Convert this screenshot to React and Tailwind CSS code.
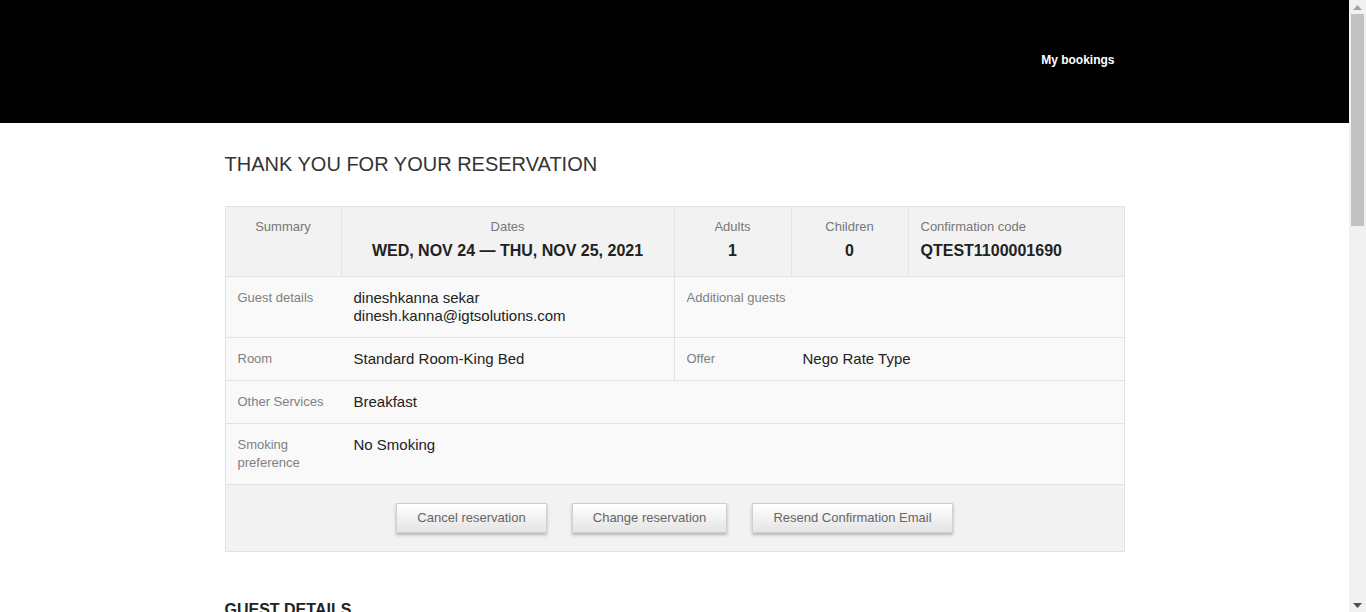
import React from 'react';

const headerCols = [
  { label: 'Summary', value: '', width: 'w-[116px]', align: 'text-center' },
  { label: 'Dates', value: 'WED, NOV 24 — THU, NOV 25, 2021', width: 'w-[333px]', align: 'text-center' },
  { label: 'Adults', value: '1', width: 'w-[117px]', align: 'text-center' },
  { label: 'Children', value: '0', width: 'w-[117px]', align: 'text-center' },
  { label: 'Confirmation code', value: 'QTEST1100001690', width: 'w-[215px]', align: 'text-left pl-3' },
];

const Label = ({ children }) => (
  <div className="w-[128px] shrink-0 pl-3 pr-3 text-[13px] leading-[18px] text-[#808080]">{children}</div>
);

const Value = ({ children }) => (
  <div className="text-[15px] leading-[18px] text-[#222]">{children}</div>
);

const ActionButton = ({ children, width }) => (
  <button
    type="button"
    className={`${width} h-[30px] border border-[#d0d0d0] bg-gradient-to-b from-white to-[#e4e4e4] text-[13px] text-[#666] shadow-[0_2px_3px_rgba(0,0,0,0.25)]`}
  >
    {children}
  </button>
);

const Scrollbar = () => (
  <div className="flex w-[17px] shrink-0 flex-col items-center bg-[#f1f1f1]">
    <div className="flex h-[14px] w-full items-center justify-center">
      <svg width="9" height="5" viewBox="0 0 9 5"><path d="M4.5 0L9 5H0z" fill="#a3a3a3" /></svg>
    </div>
    <div className="h-[212px] w-[13px] bg-[#c1c1c1]" />
    <div className="flex-1" />
    <div className="flex h-[14px] w-full items-center justify-center">
      <svg width="9" height="5" viewBox="0 0 9 5"><path d="M0 0H9L4.5 5z" fill="#505050" /></svg>
    </div>
  </div>
);

const App = () => {
  return (
    <div className="flex h-[612px] overflow-hidden bg-white font-['Liberation_Sans',Arial,sans-serif]">
      <div className="flex-1 overflow-hidden">
        <header className="h-[123px] bg-black">
          <div className="mx-auto flex w-[900px] justify-end pr-[10px] pt-[52px]">
            <a href="#" className="text-[12px] font-bold leading-4 text-white">My bookings</a>
          </div>
        </header>

        <main className="mx-auto w-[900px]">
          <h1 className="pt-[29px] text-[20px] leading-6 text-[#333]">THANK YOU FOR YOUR RESERVATION</h1>

          <div className="mt-[30px] border border-[#e2e2e2]">
            <div className="flex h-[70px] border-b border-[#e2e2e2] bg-[#f2f2f2]">
              {headerCols.map((col, i) => (
                <div
                  key={col.label}
                  className={`${col.width} ${col.align} pt-[10px] ${i < headerCols.length - 1 ? 'border-r border-[#e2e2e2]' : ''}`}
                >
                  <div className="text-[13px] leading-5 text-[#777]">{col.label}</div>
                  {col.value && (
                    <div className="mt-[4px] text-[16px] font-bold leading-5 text-[#222]">{col.value}</div>
                  )}
                </div>
              ))}
            </div>

            <div className="flex h-[61px] border-b border-[#e2e2e2] bg-[#f9f9f9]">
              <div className="flex w-[449px] border-r border-[#e2e2e2] pt-[12px]">
                <Label>Guest details</Label>
                <div>
                  <Value>dineshkanna sekar</Value>
                  <Value>dinesh.kanna@igtsolutions.com</Value>
                </div>
              </div>
              <div className="flex flex-1 pt-[12px]">
                <div className="pl-3 text-[13px] leading-[18px] text-[#808080]">Additional guests</div>
              </div>
            </div>

            <div className="flex h-[43px] border-b border-[#e2e2e2] bg-[#f9f9f9]">
              <div className="flex w-[449px] border-r border-[#e2e2e2] pt-[12px]">
                <Label>Room</Label>
                <Value>Standard Room-King Bed</Value>
              </div>
              <div className="flex flex-1 pt-[12px]">
                <Label>Offer</Label>
                <Value>Nego Rate Type</Value>
              </div>
            </div>

            <div className="flex h-[43px] border-b border-[#e2e2e2] bg-[#f9f9f9] pt-[12px]">
              <Label>Other Services</Label>
              <Value>Breakfast</Value>
            </div>

            <div className="flex h-[61px] border-b border-[#e2e2e2] bg-[#f9f9f9] pt-[12px]">
              <Label>Smoking preference</Label>
              <Value>No Smoking</Value>
            </div>

            <div className="flex h-[66px] justify-center gap-[25px] bg-[#f2f2f2] pt-[18px]">
              <ActionButton width="w-[151px]">Cancel reservation</ActionButton>
              <ActionButton width="w-[155px]">Change reservation</ActionButton>
              <ActionButton width="w-[201px]">Resend Confirmation Email</ActionButton>
            </div>
          </div>

          <h2 className="mt-[48px] text-[16px] font-bold leading-5 text-[#222]">GUEST DETAILS</h2>
          <div className="mt-4 border border-[#e2e2e2] bg-[#f9f9f9]">
            {[
              ['First name', 'dineshkanna'],
              ['Last name', 'sekar'],
              ['Email', 'dinesh.kanna@igtsolutions.com'],
            ].map(([k, v]) => (
              <div key={k} className="flex h-[43px] border-b border-[#e2e2e2] pt-[12px]">
                <Label>{k}</Label>
                <Value>{v}</Value>
              </div>
            ))}
          </div>
        </main>
      </div>
      <Scrollbar />
    </div>
  );
};

export default App;
